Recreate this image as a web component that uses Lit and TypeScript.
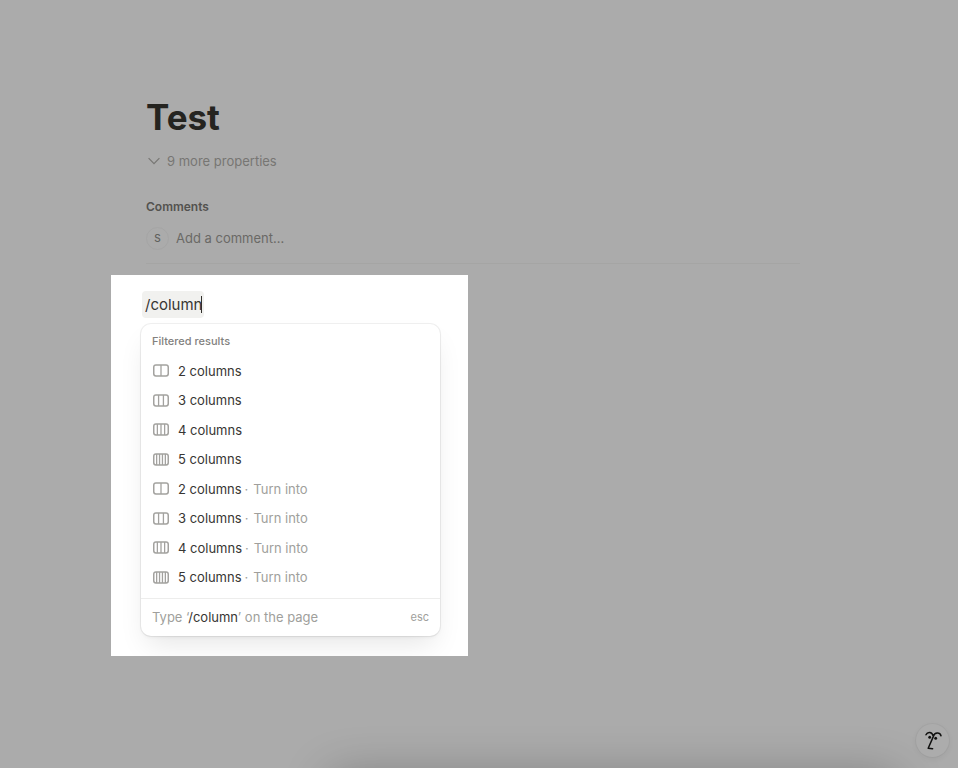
import { LitElement, html, svg, css } from "lit";
import { customElement, property } from "lit/decorators.js";

@customElement("columns-icon")
class ColumnsIcon extends LitElement {
  @property({ type: Number }) count = 2;

  static styles = css`
    :host { display: block; width: 16px; height: 13px; }
    svg { display: block; }
    .frame, .rule { fill: none; stroke: #a3a29f; }
    .frame { stroke-width: 1.5; }
    .rule { stroke-width: 1.3; }
  `;

  render() {
    const rules = Array.from({ length: this.count - 1 }, (_, i) => {
      const x = 0.75 + ((i + 1) * 14.5) / this.count;
      return svg`<path class="rule" d="M${x} 1V12"></path>`;
    });
    return html`<svg width="16" height="13" viewBox="0 0 16 13" aria-hidden="true">
      <rect class="frame" x="0.75" y="0.95" width="14.5" height="11.1" rx="2.2"></rect>
      ${rules}
    </svg>`;
  }
}

@customElement("slash-menu")
class SlashMenu extends LitElement {
  static styles = css`
    :host {
      display: block;
      box-sizing: border-box;
      border-radius: 10px;
      background: #fff;
      box-shadow: 0 0 0 1px rgba(0, 0, 0, 0.06), 0 14px 28px -6px rgba(0, 0, 0, 0.1), 0 2px 4px -1px rgba(0, 0, 0, 0.06);
      color: #373633;
    }
    h2 {
      margin: 0;
      padding: 2px 11px 0;
      font-size: 11px;
      font-weight: 500;
      line-height: 30px;
      color: #82817e;
    }
    ul {
      display: grid;
      grid-auto-rows: 1fr;
      height: 236px;
      margin: 0 0 6px;
      padding: 0;
      list-style: none;
    }
    li { display: grid; }
    button {
      display: flex;
      align-items: center;
      padding: 0 12px;
      border: 0;
      background: none;
      font: inherit;
      font-size: 13px;
      color: #373633;
      text-align: left;
    }
    columns-icon { margin-right: 9px; }
    .hint { display: flex; gap: 5px; margin-left: 3px; color: #a09f9c; }
    footer {
      display: flex;
      align-items: center;
      justify-content: space-between;
      padding: 0 11px;
      border-top: 1px solid #ededec;
      font-size: 13px;
      line-height: 37px;
      color: #a09f9c;
    }
    .query { color: #373633; }
    kbd { font: inherit; font-size: 11px; line-height: 37px; }
  `;

  render() {
    const row = (n: number, turn: boolean) => html`<li>
      <button type="button"><columns-icon .count=${n}></columns-icon>
        <span>${n} columns</span>${turn ? html`<span class="hint"><span>·</span><span>Turn into</span></span>` : ""}</button>
    </li>`;
    const counts = [2, 3, 4, 5];
    return html`
      <h2>Filtered results</h2>
      <ul>${counts.map((n) => row(n, false))}${counts.map((n) => row(n, true))}</ul>
      <footer><span>Type ‘<span class="query">/column</span>’ on the page</span><kbd>esc</kbd></footer>
    `;
  }
}

@customElement("app-root")
class AppRoot extends LitElement {
  static styles = css`
    :host {
      display: block;
      position: relative;
      box-sizing: border-box;
      min-height: 100vh;
      overflow: hidden;
      padding: 96px 158px 0 111px;
      background: #ababab;
      font-family: Inter, sans-serif;
      color: #252420;
    }
    .head { padding: 0 0 0 35px; }
    h1 { margin: 0; font-size: 35px; font-weight: 700; line-height: 42px; }
    button { font: inherit; cursor: pointer; }
    .more {
      display: flex;
      align-items: center;
      gap: 7px;
      margin: 13px 0 0;
      padding: 0 0 0 2px;
      border: 0;
      background: none;
      font-size: 13px;
      line-height: 20px;
      color: #777673;
    }
    .more path { fill: none; stroke: #777673; stroke-width: 1.2; }
    h2 { margin: 26px 0 0; font-size: 12px; font-weight: 600; line-height: 20px; color: #53524f; }
    .comment { display: flex; align-items: center; gap: 7px; height: 24px; margin: 9px 0 13px; }
    .avatar {
      box-sizing: border-box;
      width: 23px;
      height: 23px;
      border: 1px solid #a5a5a5;
      border-radius: 50%;
      font-size: 10px;
      font-weight: 500;
      line-height: 21px;
      text-align: center;
      color: #60605d;
    }
    .comment input {
      flex: 1;
      padding: 0;
      border: 0;
      outline: 0;
      background: none;
      font: inherit;
      font-size: 13px;
      line-height: 20px;
    }
    .comment input::placeholder { color: #6a6966; opacity: 1; }
    hr { margin: 0; border: 0; border-top: 1px solid #a5a5a4; }
    .spotlight {
      width: 299px;
      margin-top: 11px;
      padding: 16px 28px 20px 30px;
      overflow: hidden;
      background: #fff;
    }
    .command {
      display: flex;
      align-items: center;
      box-sizing: border-box;
      width: 62px;
      height: 27px;
      margin: 0 0 6px 1px;
      padding-left: 3px;
      border-radius: 4px;
      background: #f1f1ef;
    }
    .command input {
      width: 56px;
      padding: 0;
      border: 0;
      outline: 0;
      background: none;
      font: inherit;
      font-size: 15px;
      color: #373633;
    }
    .caret { width: 1px; height: 17px; background: #32302c; }
    .dock {
      position: absolute;
      top: 100%;
      left: 330px;
      right: 60px;
      height: 60px;
      border-radius: 12px;
      box-shadow: 0 8px 48px rgba(0, 0, 0, 0.28);
    }
    .assistant {
      position: absolute;
      right: 9px;
      bottom: 11px;
      width: 33px;
      height: 33px;
      padding: 0;
      border: 0;
      border-radius: 50%;
      background: #acacac;
      box-shadow: 0 0 0 1px rgba(0, 0, 0, 0.03), 0 2px 6px rgba(0, 0, 0, 0.06);
    }
    .assistant svg { display: block; }
    .line { fill: none; stroke: #10100f; stroke-width: 1.5; stroke-linecap: round; stroke-linejoin: round; }
  `;

  render() {
    return html`
      <section class="head">
        <h1>Test</h1>
        <button class="more" type="button">
          <svg width="12" height="8" viewBox="0 0 12 8" aria-hidden="true"><path d="M0.6 1.2L6 6.6L11.4 1.2"></path></svg>
          9 more properties
        </button>
        <h2>Comments</h2>
        <div class="comment">
          <span class="avatar">S</span>
          <input aria-label="Add a comment" placeholder="Add a comment…" />
        </div>
        <hr />
      </section>
      <section class="spotlight">
        <div class="command">
          <input aria-label="Command" value="/column" />
          <span class="caret"></span>
        </div>
        <slash-menu></slash-menu>
      </section>
      <div class="dock"></div>
      <button class="assistant" type="button" aria-label="Open assistant">
        <svg width="33" height="33" viewBox="0 0 33 33" aria-hidden="true">
          <path class="line" d="M10 10.8C11.4 7.6 16 7.6 17 11.6M12.2 24.2L17.4 12.4C18.6 8.2 23.8 8 25 11.8M12.2 24.2L16.6 24.7"></path>
          <ellipse cx="13.7" cy="13.2" rx="1.4" ry="1.5" fill="#10100f"></ellipse>
          <ellipse cx="19.7" cy="14.2" rx="1.4" ry="1.5" fill="#10100f"></ellipse>
        </svg>
      </button>
    `;
  }
}
